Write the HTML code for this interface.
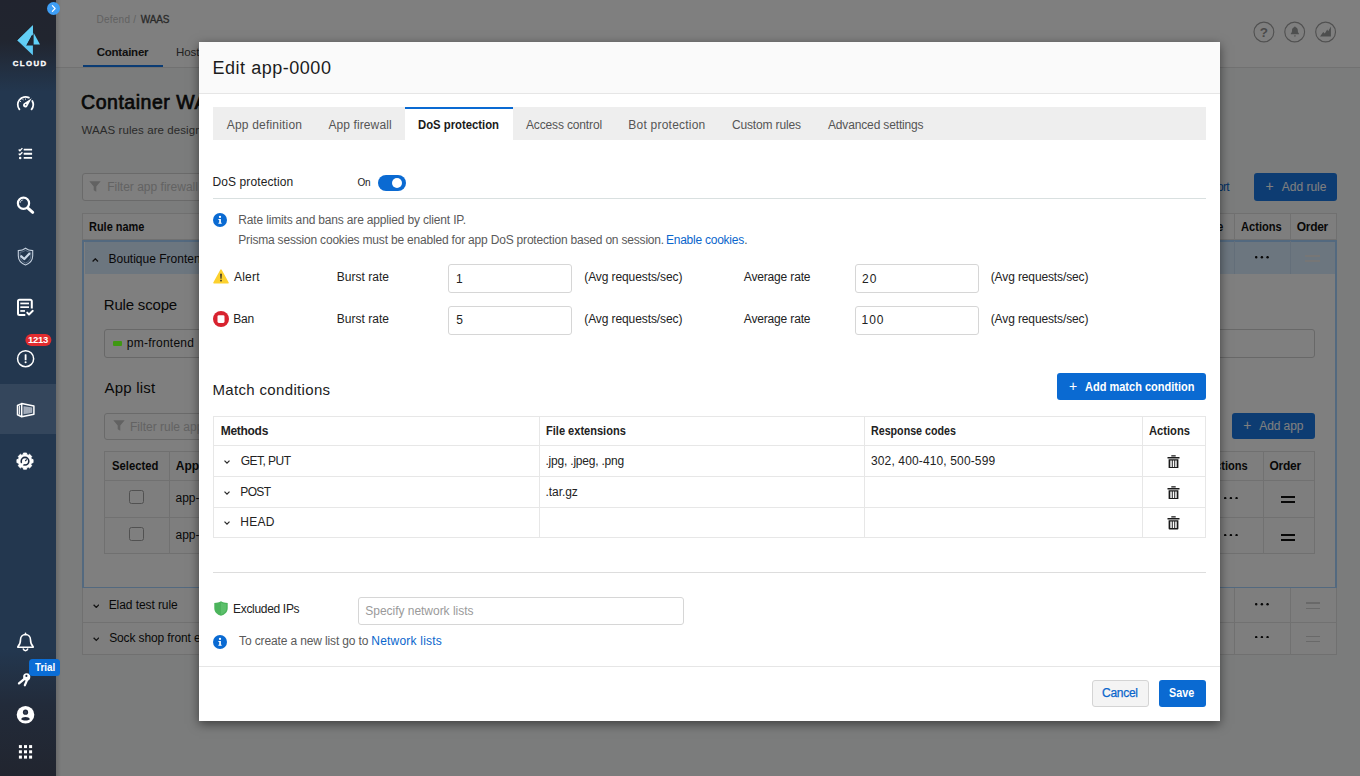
<!DOCTYPE html>
<html lang="en">
<head>
<meta charset="utf-8">
<title>Edit app-0000</title>
<style>
*{box-sizing:border-box;margin:0;padding:0}
html,body{width:1360px;height:776px;overflow:hidden;background:#f7f9f8}
body{position:relative;font-family:"Liberation Sans",sans-serif;font-size:12px;color:#222}
.a{position:absolute}
.t{position:absolute;white-space:nowrap;line-height:1;color:#222}
#page{position:absolute;left:0;top:0;width:1360px;height:776px;background:#f7f9f8;overflow:hidden}
#ov{position:absolute;left:56px;top:0;width:1304px;height:776px;background:rgba(0,0,0,.5)}
#side{position:absolute;left:0;top:0;width:56px;height:776px;background:linear-gradient(180deg,#21242f 0px,#21252f 40px,#23374f 92px,#23374f 650px,#222b3a 705px,#21252f 776px)}
#modal{position:absolute;left:0;top:0;width:0;height:0}
#mbox{position:absolute;left:199px;top:41.700px;width:1021px;height:679.300px;background:#fff;box-shadow:0 3px 10px rgba(0,0,0,.5)}
.inp{position:absolute;border:1px solid #d6d6d6;border-radius:3px;background:#fff}
.btn{position:absolute;border-radius:3px;background:#0a6ad2}
.ln{position:absolute;background:#e7e7e7}
.pl{position:absolute;background:#e2e2e2}
</style>
</head>
<body>
<div id="page">
<!-- header -->
<div class="a" style="left:56px;top:0;width:1304px;height:67px;background:#fff"></div>
<div class="a" style="left:56px;top:67px;width:1304px;height:1px;background:#e3e3e3"></div>
<div class="a" style="left:83.4px;top:65px;width:79.3px;height:2.4px;background:#1678e8"></div>

<!-- top right icons -->
<svg class="a" style="left:1253px;top:21px" width="84" height="22" viewBox="0 0 84 22">
<g fill="none" stroke="#a2a2a2" stroke-width="1.150"><circle cx="10.900" cy="11" r="9.900"/><circle cx="41.700" cy="11" r="9.900"/><circle cx="72.600" cy="11" r="9.900"/></g>
<text x="10.800" y="16.400" font-family="Liberation Sans, sans-serif" font-size="13.500" font-weight="bold" fill="#959595" text-anchor="middle">?</text>
<path d="M41.900 5.500c-.5 0-.8.300-.8.700-1.500.4-2.100 1.700-2.100 3.100 0 1.700-.4 2.700-1.300 3.500v.4h8.400v-.4c-.9-.8-1.300-1.800-1.300-3.500 0-1.400-.6-2.700-2.100-3.100 0-.4-.3-.7-.8-.7zM40.900 14.500h2c0 .6-.4 1-1 1s-1-.4-1-1z" fill="#9c9f9f"/>
<path d="M67 15.500l3.200-4.500 1.600 1.600 2.400-4.200 1 1.900 2.700-4.700V15.500z" fill="#9a9d9d"/>
</svg>
<!-- filter 1 -->
<div class="a" style="left:81.700px;top:173.200px;width:330px;height:27.400px;border:1px solid #d4d4d4;border-radius:3px;background:#fff"></div>
<svg class="a" style="left:89px;top:181px" width="12" height="11" viewBox="0 0 12 11"><path d="M.3.300h11.400L7.300 5.600v5.200L4.700 9.200V5.600z" fill="#c4c4c4"/></svg>
<div class="a" style="left:1254.100px;top:173.200px;width:83.100px;height:27.400px;border-radius:3px;background:#1b79e4"></div>
<!-- main table -->
<div class="a" style="left:82px;top:212.800px;width:1255px;height:27.400px;background:#fdfdfd;border:1px solid #e0e0e0"></div>
<div class="pl" style="left:1234.400px;top:212.800px;width:1px;height:27.400px"></div>
<div class="pl" style="left:1289.500px;top:212.800px;width:1px;height:27.400px"></div>
<!-- selected block -->
<div class="a" style="left:82px;top:240px;width:1255px;height:347.500px;background:#fff;border:1.500px solid #a6d2ff;border-right-width:2px;border-left-width:2.500px;border-top-width:2px"></div>
<div class="a" style="left:84.500px;top:242px;width:1250.500px;height:31.800px;background:#d9ecff"></div>
<div class="a" style="left:1234.400px;top:241px;width:1px;height:32.700px;background:#c9dff5"></div>
<div class="a" style="left:1289.500px;top:241px;width:1px;height:32.700px;background:#c9dff5"></div>
<svg class="a" style="left:92.2px;top:257.9px" width="6.600" height="4.200" viewBox="0 0 6.600 4.200"><path d="M.6 3.500L3.300 .800 6 3.500" fill="none" stroke="#262626" stroke-width="1.300"/></svg>
<svg class="a" style="left:1255px;top:256.40000000000003px" width="14" height="2.400" viewBox="0 0 14 2.400"><circle cx="1.200" cy="1.200" r="1.250" fill="#111"/><circle cx="6.900" cy="1.200" r="1.250" fill="#111"/><circle cx="12.600" cy="1.200" r="1.250" fill="#111"/></svg>
<div class="a" style="left:1305px;top:255px;width:15px;height:1.6px;background:#ececec"></div><div class="a" style="left:1305px;top:260.2px;width:15px;height:1.6px;background:#ececec"></div>
<!-- scope -->
<div class="a" style="left:104px;top:328.500px;width:1210.500px;height:29.800px;border:1px solid #d0d0d0;border-radius:3px;background:#fff"></div>
<!-- filter 2 -->
<div class="a" style="left:104px;top:412.600px;width:330px;height:27px;border:1px solid #d4d4d4;border-radius:3px;background:#fff"></div>
<svg class="a" style="left:112.500px;top:420.300px" width="12" height="11" viewBox="0 0 12 11"><path d="M.3.300h11.400L7.300 5.600v5.200L4.700 9.200V5.600z" fill="#c4c4c4"/></svg>
<div class="a" style="left:1231.500px;top:412.700px;width:83px;height:26px;border-radius:3px;background:#1b79e4"></div>
<!-- inner table -->
<div class="a" style="left:104px;top:450.600px;width:1210.500px;height:103px;border:1px solid #e0e0e0;background:#fdfdfd"></div>
<div class="pl" style="left:104px;top:480.200px;width:1210px;height:1px"></div>
<div class="pl" style="left:104px;top:517px;width:1210px;height:1px"></div>
<div class="pl" style="left:168.700px;top:450.600px;width:1px;height:103px"></div>
<div class="pl" style="left:1191px;top:450.600px;width:1px;height:103px"></div>
<div class="pl" style="left:1263.200px;top:450.600px;width:1px;height:103px"></div>
<div class="a" style="left:129.300px;top:490.100px;width:14.500px;height:14.300px;border:1.500px solid #a2a2a2;border-radius:2.500px;background:#fff"></div>
<div class="a" style="left:129.300px;top:527.400px;width:14.500px;height:14.100px;border:1.500px solid #a2a2a2;border-radius:2.500px;background:#fff"></div>
<svg class="a" style="left:1223.8px;top:496.8px" width="14" height="2.400" viewBox="0 0 14 2.400"><circle cx="1.200" cy="1.200" r="1.250" fill="#111"/><circle cx="6.900" cy="1.200" r="1.250" fill="#111"/><circle cx="12.600" cy="1.200" r="1.250" fill="#111"/></svg>
<svg class="a" style="left:1223.8px;top:534.0px" width="14" height="2.400" viewBox="0 0 14 2.400"><circle cx="1.200" cy="1.200" r="1.250" fill="#111"/><circle cx="6.900" cy="1.200" r="1.250" fill="#111"/><circle cx="12.600" cy="1.200" r="1.250" fill="#111"/></svg>
<div class="a" style="left:1281px;top:495.750px;width:14.3px;height:1.750px;background:#111"></div><div class="a" style="left:1281px;top:501px;width:14.3px;height:1.750px;background:#111"></div>
<div class="a" style="left:1281px;top:533.750px;width:14.3px;height:1.750px;background:#111"></div><div class="a" style="left:1281px;top:539px;width:14.3px;height:1.750px;background:#111"></div>
<!-- other rows -->
<div class="a" style="left:82px;top:587.500px;width:1255px;height:67.500px;background:#fdfdfd;border:1px solid #e0e0e0;border-top:none"></div>
<div class="pl" style="left:82px;top:621.500px;width:1255px;height:1px"></div>
<div class="pl" style="left:1234.400px;top:587.500px;width:1px;height:67px"></div>
<div class="pl" style="left:1289.500px;top:587.500px;width:1px;height:67px"></div>
<svg class="a" style="left:92.6px;top:604.3px" width="6.600" height="4.200" viewBox="0 0 6.600 4.200"><path d="M.6.700L3.300 3.400 6 .700" fill="none" stroke="#262626" stroke-width="1.300"/></svg>
<svg class="a" style="left:92.6px;top:637.4px" width="6.600" height="4.200" viewBox="0 0 6.600 4.200"><path d="M.6.700L3.300 3.400 6 .700" fill="none" stroke="#262626" stroke-width="1.300"/></svg>
<svg class="a" style="left:1255px;top:603.1999999999999px" width="14" height="2.400" viewBox="0 0 14 2.400"><circle cx="1.200" cy="1.200" r="1.250" fill="#111"/><circle cx="6.900" cy="1.200" r="1.250" fill="#111"/><circle cx="12.600" cy="1.200" r="1.250" fill="#111"/></svg>
<svg class="a" style="left:1255px;top:636.0px" width="14" height="2.400" viewBox="0 0 14 2.400"><circle cx="1.200" cy="1.200" r="1.250" fill="#111"/><circle cx="6.900" cy="1.200" r="1.250" fill="#111"/><circle cx="12.600" cy="1.200" r="1.250" fill="#111"/></svg>
<div class="a" style="left:1306px;top:602.4px;width:14.3px;height:1.6px;background:#d2d2d2"></div><div class="a" style="left:1306px;top:607.8px;width:14.3px;height:1.6px;background:#d2d2d2"></div>
<div class="a" style="left:1306px;top:635.5px;width:14.3px;height:1.6px;background:#d2d2d2"></div><div class="a" style="left:1306px;top:640.9px;width:14.3px;height:1.6px;background:#d2d2d2"></div>

<div class="t" style="left:96.45px;top:15.00px;font-size:10px;letter-spacing:0.257px;color:#c4c4c4;">Defend /</div>
<div class="t" style="left:140.75px;top:15.00px;font-size:10px;letter-spacing:-0.133px;color:#555;-webkit-text-stroke:0.3px #555;">WAAS</div>
<div class="t" style="left:96.70px;top:47.00px;font-size:11.5px;letter-spacing:-0.225px;font-weight:700;">Container</div>
<div class="t" style="left:175.90px;top:47.00px;font-size:11.5px;color:#444;">Hosts</div>
<div class="t" style="left:81.05px;top:93.00px;font-size:19.5px;letter-spacing:0.531px;color:#111;-webkit-text-stroke:0.7px #111;">Container WAAS</div>
<div class="t" style="left:81.60px;top:125.00px;font-size:11.5px;letter-spacing:0.076px;color:#555;">WAAS rules are designed to protect web applications</div>
<div class="t" style="left:107.20px;top:181.00px;font-size:12px;color:#c6c6c6;">Filter app firewall rules</div>
<div class="t" style="left:1198.60px;top:181.00px;font-size:12px;letter-spacing:-0.750px;color:#0a66cc;">Export</div>
<div class="t" style="left:1265.55px;top:179.00px;font-size:14px;color:#fff;">+</div>
<div class="t" style="left:1281.70px;top:181.00px;font-size:12px;letter-spacing:0.007px;color:#fff;">Add rule</div>
<div class="t" style="left:89.02px;top:221.00px;font-size:12px;transform:scaleX(0.9126);transform-origin:0 50%;font-weight:700;color:#111;">Rule name</div>
<div class="t" style="left:1195.33px;top:221.00px;font-size:12px;transform:scaleX(0.8992);transform-origin:0 50%;font-weight:700;color:#111;">Mode</div>
<div class="t" style="left:1241.17px;top:221.00px;font-size:12px;transform:scaleX(0.9249);transform-origin:0 50%;font-weight:700;color:#111;">Actions</div>
<div class="t" style="left:1296.70px;top:221.00px;font-size:12px;letter-spacing:-0.275px;font-weight:700;color:#111;">Order</div>
<div class="t" style="left:108.50px;top:253.00px;font-size:12px;color:#111;">Boutique Frontend</div>
<div class="t" style="left:103.75px;top:297.00px;font-size:15px;letter-spacing:-0.183px;color:#111;">Rule scope</div>
<div class="t" style="left:126.75px;top:337.00px;font-size:12px;letter-spacing:0.245px;color:#111;">pm-frontend</div>
<div class="t" style="left:104.60px;top:380.00px;font-size:15px;letter-spacing:0.200px;color:#111;">App list</div>
<div class="t" style="left:130.00px;top:421.00px;font-size:12px;color:#c6c6c6;">Filter rule apps</div>
<div class="t" style="left:1243.25px;top:418.00px;font-size:14px;color:#fff;">+</div>
<div class="t" style="left:1259.30px;top:420.00px;font-size:12px;letter-spacing:-0.092px;color:#fff;">Add app</div>
<div class="t" style="left:111.73px;top:460.00px;font-size:12px;transform:scaleX(0.9396);transform-origin:0 50%;font-weight:700;color:#111;">Selected</div>
<div class="t" style="left:175.75px;top:460.00px;font-size:12px;font-weight:700;color:#111;">App ID</div>
<div class="t" style="left:1206.77px;top:460.00px;font-size:12px;transform:scaleX(0.9249);transform-origin:0 50%;font-weight:700;color:#111;">Actions</div>
<div class="t" style="left:1269.50px;top:460.00px;font-size:12px;letter-spacing:-0.250px;font-weight:700;color:#111;">Order</div>
<div class="t" style="left:175.50px;top:492.00px;font-size:12px;color:#111;">app-0000</div>
<div class="t" style="left:175.50px;top:529.00px;font-size:12px;color:#111;">app-0001</div>
<div class="t" style="left:108.70px;top:599.00px;font-size:12px;letter-spacing:-0.077px;color:#111;">Elad test rule</div>
<div class="t" style="left:109.20px;top:632.00px;font-size:12px;letter-spacing:-0.125px;color:#111;">Sock shop front end</div>
</div>
<div id="ov"></div>
<div class="a" style="left:56px;top:0;width:5px;height:776px;background:linear-gradient(90deg,rgba(0,0,0,.14),rgba(0,0,0,0))"></div>
<div id="modal">
<div id="mbox"></div>
<div class="a" style="left:199px;top:41.700px;width:1021px;height:51.300px;background:#fafafa"></div>
<div class="a" style="left:199px;top:93px;width:1021px;height:1px;background:#e6e6e6"></div>
<div class="a" style="left:199px;top:666px;width:1021px;height:1px;background:#e6e6e6"></div>

<!-- tabs -->
<div class="a" style="left:213px;top:107px;width:993px;height:32.500px;background:#eeeeee"></div>
<div class="a" style="left:405px;top:107px;width:107.500px;height:33px;background:#fff"></div>
<div class="a" style="left:405px;top:107px;width:107.500px;height:2px;background:#0a6ad2"></div>
<!-- toggle -->
<div class="a" style="left:378px;top:175px;width:27.500px;height:15.500px;border-radius:8px;background:#0a6ad2"></div>
<div class="a" style="left:392.100px;top:177.600px;width:10.200px;height:10.200px;border-radius:50%;background:#fff"></div>
<div class="a" style="left:213px;top:197.600px;width:993px;height:1px;background:#d9e0e0"></div>
<svg class="a" style="left:213px;top:213px" width="14" height="14" viewBox="0 0 14 14"><circle cx="7" cy="7" r="7" fill="#0a6ad2"/><circle cx="7" cy="3.9" r="1.15" fill="#fff"/><path d="M5.4 5.9h2.5v3.9h.8v1H5.4v-1h.8V6.900h-.8z" fill="#fff"/></svg>
<!-- alert -->
<svg class="a" style="left:213px;top:269px" width="16" height="15" viewBox="0 0 16 15"><path d="M8 1.200L15 13.800H1z" fill="#fcd12f" stroke="#fcd12f" stroke-width="1.600" stroke-linejoin="round"/><path d="M7.200 4.800h1.600l-.25 5h-1.100z" fill="#2a2a2a"/><rect x="7.250" y="10.800" width="1.500" height="1.600" fill="#2a2a2a"/></svg>
<div class="inp" style="left:448px;top:264px;width:124px;height:28.500px"></div>
<div class="inp" style="left:855px;top:264px;width:124px;height:28.500px"></div>
<!-- ban -->
<svg class="a" style="left:213px;top:310.500px" width="16" height="16" viewBox="0 0 16 16"><circle cx="8" cy="8" r="8" fill="#d8232f"/><rect x="4.500" y="4.300" width="7" height="7.600" rx="1.300" fill="#fff"/></svg>
<div class="inp" style="left:448px;top:306px;width:124px;height:28.500px"></div>
<div class="inp" style="left:855px;top:306px;width:124px;height:28.500px"></div>
<!-- add match -->
<div class="btn" style="left:1057.300px;top:372.700px;width:148.500px;height:27.500px"></div>
<!-- table -->
<div class="ln" style="left:213px;top:416px;width:993px;height:1px"></div>
<div class="ln" style="left:213px;top:445px;width:993px;height:1px"></div>
<div class="ln" style="left:213px;top:476px;width:993px;height:1px"></div>
<div class="ln" style="left:213px;top:506.500px;width:993px;height:1px"></div>
<div class="ln" style="left:213px;top:537px;width:993px;height:1px"></div>
<div class="ln" style="left:213px;top:416px;width:1px;height:122px"></div>
<div class="ln" style="left:539px;top:416px;width:1px;height:122px"></div>
<div class="ln" style="left:864px;top:416px;width:1px;height:122px"></div>
<div class="ln" style="left:1142px;top:416px;width:1px;height:122px"></div>
<div class="ln" style="left:1205px;top:416px;width:1px;height:122px"></div>
<svg class="a" style="left:224.400px;top:459.500px" width="6" height="4" viewBox="0 0 6 4"><path d="M.5.600L3 3.100 5.500.600" fill="none" stroke="#2a2a2a" stroke-width="1.250"/></svg>
<svg class="a" style="left:224.400px;top:490.700px" width="6" height="4" viewBox="0 0 6 4"><path d="M.5.600L3 3.100 5.500.600" fill="none" stroke="#2a2a2a" stroke-width="1.250"/></svg>
<svg class="a" style="left:224.400px;top:521.200px" width="6" height="4" viewBox="0 0 6 4"><path d="M.5.600L3 3.100 5.500.600" fill="none" stroke="#2a2a2a" stroke-width="1.250"/></svg>
<svg class="a" style="left:1167px;top:454.800px" width="13" height="13.500" viewBox="0 0 13 13.500"><path d="M4.300.2h4.400v1.300H4.300zM.5 1.900h12v1.500H.5zM1.600 4.200h9.800v8.300q0 1-1 1H2.600q-1 0-1-1z" fill="#1a1a1a"/><path d="M3.300 5.500h1.500v6.500H3.300zM5.750 5.500h1.500v6.500h-1.500zM8.200 5.500h1.500v6.500H8.200z" fill="#fff"/></svg>
<svg class="a" style="left:1167px;top:485.900px" width="13" height="13.500" viewBox="0 0 13 13.500"><path d="M4.300.2h4.400v1.300H4.300zM.5 1.900h12v1.500H.5zM1.600 4.200h9.800v8.300q0 1-1 1H2.600q-1 0-1-1z" fill="#1a1a1a"/><path d="M3.300 5.500h1.500v6.500H3.300zM5.750 5.500h1.500v6.500h-1.500zM8.200 5.500h1.500v6.500H8.200z" fill="#fff"/></svg>
<svg class="a" style="left:1167px;top:516.200px" width="13" height="13.500" viewBox="0 0 13 13.500"><path d="M4.300.2h4.400v1.300H4.300zM.5 1.900h12v1.500H.5zM1.600 4.200h9.800v8.300q0 1-1 1H2.600q-1 0-1-1z" fill="#1a1a1a"/><path d="M3.300 5.500h1.500v6.500H3.300zM5.750 5.500h1.500v6.500h-1.500zM8.200 5.500h1.500v6.500H8.200z" fill="#fff"/></svg>
<div class="a" style="left:213px;top:572px;width:993px;height:1.200px;background:#dddddd"></div>
<!-- excluded -->
<svg class="a" style="left:213.500px;top:601px" width="14" height="15" viewBox="0 0 14 15"><path d="M7 .2C5.200 1.300 3 1.800.3 1.900v5.300c0 3.700 2.700 6.300 6.700 7.600 4-1.300 6.700-3.900 6.700-7.600V1.900C11 1.800 8.800 1.300 7 .2z" fill="#4cb45c"/><path d="M7 1.500v12c2.900-1.100 5.300-3.200 5.300-6.300V3.100C10.300 3 8.500 2.500 7 1.500z" fill="#5cc06b"/></svg>
<div class="inp" style="left:357.500px;top:596.500px;width:326.500px;height:28px"></div>
<svg class="a" style="left:213px;top:635px" width="14" height="14" viewBox="0 0 14 14"><circle cx="7" cy="7" r="7" fill="#0a6ad2"/><circle cx="7" cy="3.9" r="1.15" fill="#fff"/><path d="M5.4 5.9h2.5v3.9h.8v1H5.4v-1h.8V6.900h-.8z" fill="#fff"/></svg>
<!-- footer -->
<div class="a" style="left:1091.500px;top:679.500px;width:57.500px;height:27.500px;border:1px solid #d4d4d4;border-radius:3px;background:#f4f4f4"></div>
<div class="btn" style="left:1158.800px;top:679.500px;width:47.200px;height:27.500px"></div>

<div class="t" style="left:212.50px;top:59.00px;font-size:18px;letter-spacing:0.525px;color:#1c1c1c;">Edit app-0000</div>
<div class="t" style="left:226.80px;top:119.00px;font-size:12px;letter-spacing:0.185px;color:#555;">App definition</div>
<div class="t" style="left:328.50px;top:119.00px;font-size:12px;letter-spacing:0.095px;color:#555;">App firewall</div>
<div class="t" style="left:417.99px;top:119.00px;font-size:12px;transform:scaleX(0.9420);transform-origin:0 50%;font-weight:700;color:#1a1a1a;">DoS protection</div>
<div class="t" style="left:526.00px;top:119.00px;font-size:12px;letter-spacing:-0.150px;color:#555;">Access control</div>
<div class="t" style="left:628.30px;top:119.00px;font-size:12px;letter-spacing:0.227px;color:#555;">Bot protection</div>
<div class="t" style="left:732.00px;top:119.00px;font-size:12px;letter-spacing:-0.159px;color:#555;">Custom rules</div>
<div class="t" style="left:828.00px;top:119.00px;font-size:12px;letter-spacing:-0.153px;color:#555;">Advanced settings</div>
<div class="t" style="left:212.50px;top:176.00px;font-size:12px;letter-spacing:0.100px;">DoS protection</div>
<div class="t" style="left:357.50px;top:178.00px;font-size:10px;letter-spacing:-0.250px;">On</div>
<div class="t" style="left:238.30px;top:214.00px;font-size:12px;letter-spacing:-0.168px;color:#5a5a5a;">Rate limits and bans are applied by client IP.</div>
<div class="t" style="left:238.30px;top:234.00px;font-size:12px;letter-spacing:-0.193px;color:#5a5a5a;">Prisma session cookies must be enabled for app DoS protection based on session.</div>
<div class="t" style="left:666.00px;top:234.00px;font-size:12px;letter-spacing:-0.246px;color:#0a66cc;">Enable cookies</div>
<div class="t" style="left:744.30px;top:234.00px;font-size:12px;color:#5a5a5a;">.</div>
<div class="t" style="left:336.80px;top:271.00px;font-size:12px;letter-spacing:0.022px;">Burst rate</div>
<div class="t" style="left:584.25px;top:271.00px;font-size:12px;letter-spacing:-0.097px;">(Avg requests/sec)</div>
<div class="t" style="left:743.80px;top:271.00px;font-size:12px;letter-spacing:-0.164px;">Average rate</div>
<div class="t" style="left:990.75px;top:271.00px;font-size:12px;letter-spacing:-0.126px;">(Avg requests/sec)</div>
<div class="t" style="left:336.80px;top:313.00px;font-size:12px;letter-spacing:0.022px;">Burst rate</div>
<div class="t" style="left:584.25px;top:313.00px;font-size:12px;letter-spacing:-0.097px;">(Avg requests/sec)</div>
<div class="t" style="left:743.80px;top:313.00px;font-size:12px;letter-spacing:-0.164px;">Average rate</div>
<div class="t" style="left:990.75px;top:313.00px;font-size:12px;letter-spacing:-0.126px;">(Avg requests/sec)</div>
<div class="t" style="left:234.00px;top:271.00px;font-size:12px;letter-spacing:0.200px;">Alert</div>
<div class="t" style="left:233.30px;top:313.00px;font-size:12px;letter-spacing:-0.250px;">Ban</div>
<div class="t" style="left:456.00px;top:273.00px;font-size:12px;">1</div>
<div class="t" style="left:862.00px;top:273.00px;font-size:12px;letter-spacing:1.000px;">20</div>
<div class="t" style="left:456.30px;top:314.00px;font-size:12px;">5</div>
<div class="t" style="left:861.50px;top:314.00px;font-size:12px;letter-spacing:1.000px;">100</div>
<div class="t" style="left:212.55px;top:382.00px;font-size:15px;letter-spacing:0.330px;color:#1c1c1c;">Match conditions</div>
<div class="t" style="left:1069.05px;top:379.00px;font-size:14px;color:#fff;">+</div>
<div class="t" style="left:1085.27px;top:381.00px;font-size:12px;transform:scaleX(0.9173);transform-origin:0 50%;font-weight:700;color:#fff;">Add match condition</div>
<div class="t" style="left:220.75px;top:425.00px;font-size:12px;letter-spacing:-0.292px;font-weight:700;">Methods</div>
<div class="t" style="left:545.81px;top:425.00px;font-size:12px;transform:scaleX(0.9205);transform-origin:0 50%;font-weight:700;">File extensions</div>
<div class="t" style="left:870.83px;top:425.00px;font-size:12px;transform:scaleX(0.8902);transform-origin:0 50%;font-weight:700;">Response codes</div>
<div class="t" style="left:1149.37px;top:425.00px;font-size:12px;transform:scaleX(0.9295);transform-origin:0 50%;font-weight:700;">Actions</div>
<div class="t" style="left:240.80px;top:455.00px;font-size:12px;letter-spacing:-0.536px;">GET, PUT</div>
<div class="t" style="left:545.50px;top:455.00px;font-size:12px;letter-spacing:-0.209px;">.jpg, .jpeg, .png</div>
<div class="t" style="left:871.00px;top:455.00px;font-size:12px;letter-spacing:0.135px;">302, 400-410, 500-599</div>
<div class="t" style="left:240.30px;top:486.00px;font-size:12px;letter-spacing:-0.667px;">POST</div>
<div class="t" style="left:545.50px;top:486.00px;font-size:12px;letter-spacing:-0.058px;">.tar.gz</div>
<div class="t" style="left:240.30px;top:516.00px;font-size:12px;letter-spacing:0.250px;">HEAD</div>
<div class="t" style="left:233.00px;top:603.00px;font-size:12px;letter-spacing:-0.314px;">Excluded IPs</div>
<div class="t" style="left:365.30px;top:605.00px;font-size:12px;letter-spacing:-0.028px;color:#9a9a9a;">Specify network lists</div>
<div class="t" style="left:239.05px;top:635.00px;font-size:12px;letter-spacing:-0.132px;color:#5a5a5a;">To create a new list go to</div>
<div class="t" style="left:371.30px;top:635.00px;font-size:12px;letter-spacing:0.208px;color:#0a66cc;">Network lists</div>
<div class="t" style="left:1102.10px;top:687.00px;font-size:12px;letter-spacing:-0.290px;color:#0a66cc;-webkit-text-stroke:0.25px #0a66cc;">Cancel</div>
<div class="t" style="left:1169.45px;top:687.00px;font-size:12px;transform:scaleX(0.8991);transform-origin:0 50%;font-weight:700;color:#fff;">Save</div>
</div>
<div id="side">

<div class="a" style="left:0;top:383.500px;width:56px;height:50.500px;background:#34465c"></div>
<svg class="a" style="left:0;top:0" width="56" height="776" viewBox="0 0 56 776">
<!-- logo -->
<path d="M32.900 25.300L17.400 40.400 32.900 55.300V45.400H26L32.100 34.200 32.900 35.500z" fill="#5bc8f2"/>
<path d="M32.900 25.300L17.400 40.400 26 45.400 32.100 34.200 32.900 35.500z" fill="#63cff6"/>
<path d="M33.600 32.800L40 44.500H33.600z" fill="#5fd0f8"/>
<!-- gauge -->
<g fill="none" stroke="#fff" stroke-width="1.800" stroke-linecap="round">
<path d="M19.43 109.34A7.7 7.7 0 0 1 28.88 97.68"/>
<path d="M32.30 100.99A7.7 7.7 0 0 1 31.57 109.34"/>
</g>
<g stroke="#fff" stroke-width="1" stroke-linecap="butt"><path d="M20.200 101.300l.9.600M22.800 99.300l.5.900M25.500 98.600v1"/></g>
<path d="M31.700 98.300L27.500 105.900A2.300 2.300 0 1 1 24 103.300z" fill="#fff"/>
<circle cx="25.700" cy="104.700" r=".7" fill="#243a55"/>
<!-- list -->
<g fill="#fff"><rect x="23.700" y="148.700" width="8.400" height="1.900" rx=".3"/><rect x="23.700" y="152.800" width="8.400" height="1.900" rx=".3"/><rect x="23.700" y="156.900" width="8.400" height="1.900" rx=".3"/><circle cx="20.200" cy="157.900" r="1.250"/></g>
<g fill="none" stroke="#fff" stroke-width="1.300"><path d="M18.700 149.500l1.200 1.200 2.500-2.600M18.700 153.600l1.200 1.200 2.500-2.600"/></g>
<!-- search -->
<circle cx="23.500" cy="203.200" r="5.600" fill="none" stroke="#fff" stroke-width="2.200"/>
<path d="M28.200 208.400L32.700 212.300" stroke="#fff" stroke-width="3" stroke-linecap="round"/>
<path d="M20.11 202.90A3.4 3.4 0 0 1 23.20 199.81" fill="none" stroke="#dfe6ee" stroke-width=".8"/>
<!-- shield -->
<path d="M25.500 248.200c2 1.600 4.500 2.300 7.200 2.400v5.200c0 4.300-3 7.600-7.200 9.200-4.200-1.600-7.200-4.900-7.200-9.200v-5.200c2.700-.1 5.200-.8 7.200-2.400z" fill="none" stroke="#c3cfdd" stroke-width="1.100"/>
<path d="M25.500 250.400c1.600 1.100 3.400 1.700 5.400 1.900v3.600c0 3.300-2.200 5.800-5.400 7.100-3.200-1.300-5.400-3.800-5.400-7.100v-3.600c2-.2 3.800-.8 5.400-1.900z" fill="none" stroke="#7f90a6" stroke-width=".6"/>
<path d="M21.300 256.300l3 2.700 5-5.200" fill="none" stroke="#c9d6e6" stroke-width="2.300" stroke-linecap="round" stroke-linejoin="round"/>
<!-- doc check -->
<path d="M25.300 315H19.500a1.500 1.500 0 0 1-1.500-1.500V301.300a1.500 1.500 0 0 1 1.500-1.500H30.300a1.500 1.500 0 0 1 1.500 1.500V308.500" fill="none" stroke="#fff" stroke-width="2"/>
<g fill="#fff"><rect x="20.300" y="302.600" width="8.700" height="1.700"/><rect x="20.300" y="306.300" width="8.700" height="1.700"/><rect x="20.300" y="310.100" width="4.700" height="1.700"/></g>
<path d="M27.200 312.600l1.800 1.900 3.800-3.700" fill="none" stroke="#fff" stroke-width="1.900" stroke-linecap="round" stroke-linejoin="round"/>
<!-- alert circle -->
<circle cx="25.600" cy="358.700" r="8.050" fill="none" stroke="#fff" stroke-width="1.500"/>
<rect x="24.700" y="354.300" width="1.800" height="6" rx=".5" fill="#fff"/><circle cx="25.600" cy="362.300" r="1.050" fill="#fff"/>
<rect x="25.400" y="334.100" width="26" height="12" rx="6" fill="#e22c2f"/>
<!-- container -->
<g fill="none" stroke="#fff" stroke-width="1.500" stroke-linejoin="round">
<path d="M21.700 403.600L33.900 405.900V414.200L21.700 416.700z"/>
<path d="M21.700 403.600L17.500 405.500V414.800L21.700 416.700"/>
</g>
<path d="M19.400 405.800V414.600" stroke="#fff" stroke-width="1" />
<path d="M23.500 406.200L32.200 407.500V412.700L23.500 414.200z" fill="#a9b2bf"/>
<g stroke="#8f99a8" stroke-width=".5"><path d="M25.200 406.500V414M27 406.800V413.700M28.800 407V413.400M30.600 407.300V413"/></g>
<!-- gear -->
<path d="M31.44 459.25L33.05 459.54L33.05 462.66L31.44 462.95L30.86 464.35L31.80 465.69L29.59 467.90L28.25 466.96L26.85 467.54L26.56 469.15L23.44 469.15L23.15 467.54L21.75 466.96L20.41 467.90L18.20 465.69L19.14 464.35L18.56 462.95L16.95 462.66L16.95 459.54L18.56 459.25L19.14 457.85L18.20 456.51L20.41 454.30L21.75 455.24L23.15 454.66L23.44 453.05L26.56 453.05L26.85 454.66L28.25 455.24L29.59 454.30L31.80 456.51L30.86 457.85Z" fill="#fff" stroke="#fff" stroke-width=".9" stroke-linejoin="round"/>
<circle cx="25" cy="461.200" r="3.800" fill="none" stroke="#1c2a40" stroke-width="1.600"/>
<path d="M20.800 465.600L24.300 462" stroke="#fff" stroke-width="2.400"/>
<path d="M21.800 464.600L24.600 461.700" stroke="#fff" stroke-width="1.300"/>
<circle cx="25.300" cy="460.900" r="1.700" fill="#fff"/>
<path d="M25.200 461L26.800 459.300" stroke="#1f2f47" stroke-width="1.100"/>
<!-- bell -->
<path d="M25.500 633.300v1.200M25.500 634.500c-3 0-5 2.300-5 5.300 0 3.400-.9 5.200-2.700 7v.5h15.400v-.5c-1.800-1.800-2.700-3.600-2.700-7 0-3-2-5.300-5-5.300z" fill="none" stroke="#fff" stroke-width="1.600" stroke-linejoin="round" stroke-linecap="round"/>
<path d="M23.300 649a2.300 2.300 0 0 0 4.400 0" fill="none" stroke="#fff" stroke-width="1.500" stroke-linecap="round"/>
<!-- keys -->
<path d="M25 678.300L19 683.400" stroke="#fff" stroke-width="2.300" stroke-linecap="round"/>
<path d="M27.300 679.500L24.800 685.300" stroke="#fff" stroke-width="2.200" stroke-linecap="round"/>
<circle cx="26.700" cy="676.900" r="3.600" fill="#fff"/>
<circle cx="26.400" cy="675.900" r="1.050" fill="#222c40"/>
<!-- user -->
<circle cx="25.500" cy="714.800" r="8.800" fill="#fff"/>
<circle cx="25.500" cy="712.200" r="2.600" fill="#222a3b"/>
<circle cx="25.500" cy="712.200" r="1.300" fill="#3a4356"/>
<path d="M21.100 719.200c.4-1.400 2.300-2.300 4.400-2.300s4 .9 4.400 2.300c-1 .9-2.600 1.400-4.400 1.400s-3.400-.5-4.400-1.400z" fill="#222a3b"/>
<!-- grid -->
<g fill="#fff"><rect x="18.9" y="745.1" width="3" height="3"/><rect x="24" y="745.1" width="3" height="3"/><rect x="29.1" y="745.1" width="3" height="3"/><rect x="18.9" y="750.3" width="3" height="3"/><rect x="24" y="750.3" width="3" height="3"/><rect x="29.1" y="750.3" width="3" height="3"/><rect x="18.9" y="755.6" width="3" height="3"/><rect x="24" y="755.6" width="3" height="3"/><rect x="29.1" y="755.6" width="3" height="3"/></g>
</svg>

</div>
<div id="top">

<div class="a" style="left:47.400px;top:2.300px;width:13px;height:13px;border-radius:50%;background:#3e9ef5"></div>
<svg class="a" style="left:47.400px;top:2.300px" width="13" height="13" viewBox="0 0 13 13"><path d="M5.400 3.700L8.100 6.500 5.400 9.300" fill="none" stroke="#fff" stroke-width="1.200" stroke-linecap="round" stroke-linejoin="round"/></svg>
<div class="a" style="left:29.100px;top:658.900px;width:30.500px;height:17.500px;border-radius:3.500px;background:#0a6dd6"></div>

<div class="a" style="left:113.100px;top:341.400px;width:8.900px;height:5px;background:#3f9812;border-radius:1px"></div>
<div class="t" style="left:12.65px;top:60.00px;font-size:7.8px;letter-spacing:1.438px;font-weight:700;color:#fff;-webkit-text-stroke:0.35px #fff;">CLOUD</div>
<div class="t" style="left:28.00px;top:335.00px;font-size:9.5px;letter-spacing:-0.250px;font-weight:700;color:#fff;">1213</div>
<div class="t" style="left:34.60px;top:662.00px;font-size:11px;transform:scaleX(0.8955);transform-origin:0 50%;font-weight:700;color:#fff;">Trial</div>
</div>
</body>
</html>
